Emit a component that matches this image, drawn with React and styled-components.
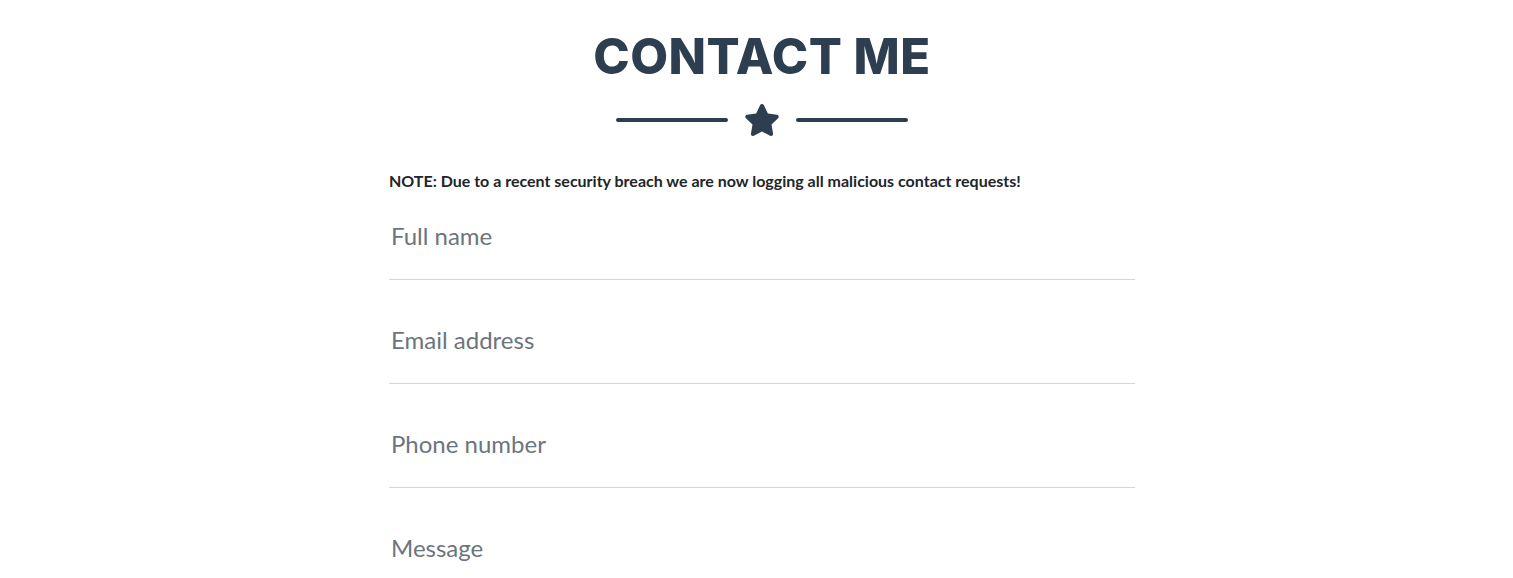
import React from 'react';
import styled, { createGlobalStyle } from 'styled-components';

const GlobalStyle = createGlobalStyle`
  html, body {
    margin: 0;
    padding: 0;
    background: #ffffff;
  }
  body {
    font-family: Lato, "Liberation Sans", sans-serif;
    color: #212529;
  }
`;

const Section = styled.section`
  padding: 27px 0 0 11px;
`;

const Column = styled.div`
  width: 746px;
  margin: 0 auto;
`;

const Heading = styled.h2`
  margin: 0;
  font-family: Inter, "DejaVu Sans", sans-serif;
  font-weight: 800;
  font-size: 49px;
  line-height: 60px;
  letter-spacing: 0.5px;
  text-align: center;
  text-transform: uppercase;
  color: #2c3e50;
`;

const Divider = styled.div`
  display: flex;
  align-items: center;
  justify-content: center;
  margin: 17px 0 34px;
`;

const DividerLine = styled.span`
  width: 112px;
  height: 4px;
  border-radius: 16px;
  background: #2c3e50;
`;

const DividerIcon = styled.svg`
  width: 36px;
  height: 32px;
  margin: 0 16px;
  fill: #2c3e50;
`;

const Note = styled.p`
  margin: 0;
  font-size: 16px;
  font-weight: 700;
  line-height: 22px;
  color: #212529;
`;

const Form = styled.form`
  display: flex;
  flex-direction: column;
`;

const Field = styled.div`
  padding: 45px 2px 28px;
  border-bottom: 1px solid #d2d4d8;

  &:first-child {
    padding-top: 29px;
  }
`;

const Input = styled.input`
  display: block;
  width: 100%;
  box-sizing: border-box;
  padding: 0;
  border: none;
  outline: none;
  background: transparent;
  font-family: Lato, "Liberation Sans", sans-serif;
  font-size: 24px;
  line-height: 30px;
  height: 30px;
  color: #495057;

  &::placeholder {
    color: #6c757d;
    opacity: 1;
  }
`;

const fields = ['Full name', 'Email address', 'Phone number', 'Message'];

export default function App() {
  return (
    <>
      <GlobalStyle />
      <Section>
        <Column>
          <Heading>Contact Me</Heading>
          <Divider>
            <DividerLine />
            <DividerIcon viewBox="0 0 576 512">
              <path d="M259.3 17.8L194 150.2 47.9 171.5c-26.2 3.8-36.7 36.1-17.7 54.6l105.7 103-25 145.5c-4.5 26.3 23.2 46 46.4 33.7L288 439.6l130.7 68.7c23.2 12.2 50.9-7.4 46.4-33.7l-25-145.5 105.7-103c19-18.5 8.5-50.8-17.7-54.6L382 150.2 316.7 17.8c-11.7-23.6-45.6-23.9-57.4 0z" />
            </DividerIcon>
            <DividerLine />
          </Divider>
          <Note>NOTE: Due to a recent security breach we are now logging all malicious contact requests!</Note>
          <Form>
            {fields.map((f) => (
              <Field key={f}>
                <Input placeholder={f} />
              </Field>
            ))}
          </Form>
        </Column>
      </Section>
    </>
  );
}
